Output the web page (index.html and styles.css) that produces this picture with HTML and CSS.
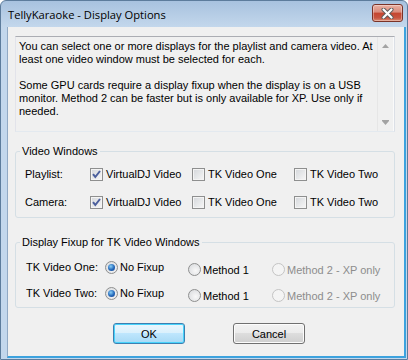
FILE: index.html
```html
<!DOCTYPE html>
<html lang="en">
<head>
    <meta charset="UTF-8">
    <title>TellyKaraoke - Display Options</title>
    <link rel="stylesheet" href="styles.css">
</head>
<body>
    <div class="window">
        <div class="titlebar">
            <span class="title">TellyKaraoke - Display Options</span>
            <button class="close-button" aria-label="Close">
                <svg width="13" height="11" viewBox="0 0 13 11">
                    <path d="M2.5 1.5 L10.5 9.5 M10.5 1.5 L2.5 9.5" stroke="#5a5a5a" stroke-width="4" stroke-linecap="round"/>
                    <path d="M2.5 1.5 L10.5 9.5 M10.5 1.5 L2.5 9.5" stroke="#ffffff" stroke-width="2.2" stroke-linecap="round"/>
                </svg>
            </button>
        </div>

        <div class="client">
            <div class="info-box">
                <div class="info-text">
                    <p>You can select one or more displays for the playlist and camera video. At<br>least one video window must be selected for each.</p>
                    <p>Some GPU cards require a display fixup when the display is on a USB<br>monitor. Method 2 can be faster but is only available for XP. Use only if<br>needed.</p>
                </div>
                <div class="scrollbar">
                    <div class="scroll-btn">
                        <svg width="7" height="4" viewBox="0 0 7 4"><path d="M3.5 0 L7 4 L0 4 Z" fill="#a3a3a3"/></svg>
                    </div>
                    <div class="scroll-btn">
                        <svg width="7" height="5" viewBox="0 0 7 5"><path d="M0 0 H7 V1 L3.5 5 L0 1 Z" fill="#a3a3a3"/></svg>
                    </div>
                </div>
            </div>

            <fieldset class="group video-group">
                <legend>Video Windows</legend>
                <div class="row">
                    <span class="row-label">Playlist:</span>
                    <label class="check"><span class="checkbox checked"><svg width="11" height="11" viewBox="0 0 11 11"><path d="M2 5.2 L4.3 8 L9 2" fill="none" stroke="#4b5f9d" stroke-width="2"/></svg></span>VirtualDJ Video</label>
                    <label class="check"><span class="checkbox"></span>TK Video One</label>
                    <label class="check"><span class="checkbox"></span>TK Video Two</label>
                </div>
                <div class="row">
                    <span class="row-label">Camera:</span>
                    <label class="check"><span class="checkbox checked"><svg width="11" height="11" viewBox="0 0 11 11"><path d="M2 5.2 L4.3 8 L9 2" fill="none" stroke="#4b5f9d" stroke-width="2"/></svg></span>VirtualDJ Video</label>
                    <label class="check"><span class="checkbox"></span>TK Video One</label>
                    <label class="check"><span class="checkbox"></span>TK Video Two</label>
                </div>
            </fieldset>

            <fieldset class="group fixup-group">
                <legend>Display Fixup for TK Video Windows</legend>
                <div class="row">
                    <span class="row-label">TK Video One:</span>
                    <label class="option"><span class="radio selected"></span>No Fixup</label>
                    <label class="option low"><span class="radio"></span>Method 1</label>
                    <label class="option low disabled"><span class="radio"></span>Method 2 - XP only</label>
                </div>
                <div class="row">
                    <span class="row-label">TK Video Two:</span>
                    <label class="option"><span class="radio selected"></span>No Fixup</label>
                    <label class="option low"><span class="radio"></span>Method 1</label>
                    <label class="option low disabled"><span class="radio"></span>Method 2 - XP only</label>
                </div>
            </fieldset>

            <div class="buttons">
                <button class="button default">OK</button>
                <button class="button">Cancel</button>
            </div>
        </div>
    </div>
</body>
</html>
```

FILE: styles.css
```css
body {
    margin: 0;
    background: #ffffff;
    font-family: "Liberation Sans", Arial, sans-serif;
    font-size: 11px;
    color: #000;
}

.window {
    width: 408px;
    height: 360px;
    box-sizing: border-box;
    border: 1px solid #5d7c9c;
    border-radius: 6px 6px 0 0;
    padding: 0 1px 1px 6px;
    background: linear-gradient(#a8c2df, #c3d7ec 26px, #c3d7ec);
    display: flex;
    flex-direction: column;
}

.titlebar {
    height: 26px;
    display: flex;
    align-items: center;
    padding-left: 1px;
}

.title {
    font-family: "Open Sans", sans-serif;
    font-size: 11.2px;
    color: #000;
}

.close-button {
    margin-left: auto;
    margin-right: 3px;
    align-self: flex-start;
    margin-top: 3px;
    width: 31px;
    height: 18px;
    padding: 0;
    border: 1px solid #7a3328;
    border-radius: 3px;
    background: linear-gradient(#eab1a3 0%, #d98a7b 45%, #c5452f 50%, #c75440 80%, #dc8a70 100%);
    box-shadow: inset 0 0 0 1px rgba(255, 255, 255, 0.35);
    display: flex;
    align-items: center;
    justify-content: center;
}

.client {
    flex: 1;
    background: #f0f0f0;
    border-left: 1px solid #91a9c4;
    border-right: 2px solid #3ca2de;
    border-bottom: 2px solid #3ca2de;
    padding: 9px 0 0 7px;
    display: flex;
    flex-direction: column;
}

/* read-only text box */
.info-box {
    width: 380px;
    height: 96px;
    box-sizing: border-box;
    border: 1px solid;
    border-color: #abadb3 #dbdfe6 #e3e9ef #e2e3ea;
    display: flex;
}

.info-text {
    flex: 1;
    padding: 3px 0 0 3px;
    line-height: 13px;
    white-space: nowrap;
}

.info-text p {
    margin: 0 0 13px;
}

.scrollbar {
    width: 17px;
    border-left: 1px solid #e6e6e6;
    border-right: 1px solid #fafafa;
    box-sizing: border-box;
    display: flex;
    flex-direction: column;
    justify-content: space-between;
}

.scroll-btn {
    height: 17px;
    display: flex;
    align-items: center;
    justify-content: center;
}

/* group boxes */
.group {
    width: 380px;
    box-sizing: border-box;
    margin: 0;
    padding: 0 0 1px 9px;
    border: 1px solid #d5dfe5;
    border-radius: 3px;
    min-inline-size: 0;
}

.group legend {
    padding: 0 2px;
    margin-left: -5px;
    line-height: 14px;
}

.video-group {
    margin-top: 12px;
    padding-top: 2px;
}

.fixup-group {
    margin-top: 17px;
    padding-top: 5px;
    padding-left: 10px;
}

.fixup-group legend {
    margin-left: -6px;
}

.row {
    display: grid;
    align-items: center;
}

.video-group .row {
    height: 28px;
    grid-template-columns: 65px 102px 102px auto;
}

.fixup-group .row {
    height: 26px;
    grid-template-columns: 79px 83px 84px auto;
}

.check, .option {
    display: flex;
    align-items: center;
    gap: 3px;
}

.option {
    gap: 2px;
}

.option.low {
    margin-top: 5px;
}

.option.disabled {
    color: #8d8d8d;
}

.checkbox {
    width: 13px;
    height: 13px;
    box-sizing: border-box;
    border: 1px solid #8e8f8f;
    background: linear-gradient(135deg, #d4d7db, #f7f7f7);
    box-shadow: inset 0 0 0 1px #f4f4f4;
    display: flex;
    align-items: center;
    justify-content: center;
}

.radio {
    width: 13px;
    height: 13px;
    box-sizing: border-box;
    border: 1px solid #8e8f8f;
    border-radius: 50%;
    background: radial-gradient(circle at 60% 60%, #f8f8f8, #d6d8db);
    display: flex;
    align-items: center;
    justify-content: center;
}

.radio.selected::after {
    content: "";
    width: 7px;
    height: 7px;
    border-radius: 50%;
    background: radial-gradient(circle at 40% 35%, #8ad0f7, #2367b9 55%, #163f86);
}

.option.disabled .radio {
    border-color: #c4c4c4;
    background: #f4f4f4;
}

/* dialog buttons */
.buttons {
    display: flex;
    gap: 48px;
    margin: 15px 0 0 98px;
}

.button {
    width: 72px;
    height: 21px;
    padding: 0;
    font-family: "Liberation Sans", Arial, sans-serif;
    font-size: 11px;
    color: #000;
    border: 1px solid #707070;
    border-radius: 3px;
    background: linear-gradient(#f2f2f2 0%, #ebebeb 50%, #dddddd 50%, #cfcfcf 100%);
    box-shadow: inset 0 0 0 1px #fcfcfc;
}

.button.default {
    border-color: #3c7fb1;
    background: linear-gradient(#eaf6fd 0%, #d9f0fc 50%, #bee6fd 50%, #a7d9f5 100%);
    box-shadow: inset 0 0 0 1px #48d3fb;
}
```
